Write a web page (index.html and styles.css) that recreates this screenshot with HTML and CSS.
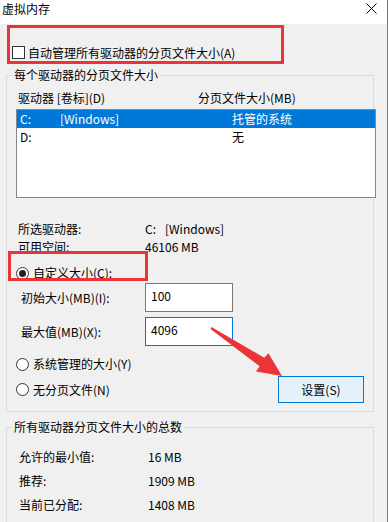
FILE: index.html
```html
<!DOCTYPE html>
<html lang="zh-CN">
<head>
<meta charset="utf-8">
<title>虚拟内存</title>
<link rel="stylesheet" href="styles.css">
</head>
<body>
<div class="window">
  <div class="titlebar">
    <span class="title">虚拟内存</span>
    <svg class="close" width="11" height="11" viewBox="0 0 11 11"><path d="M0.5 0.5 L10.5 10.5 M10.5 0.5 L0.5 10.5" stroke="#000" stroke-width="1" fill="none"/></svg>
  </div>
  <div class="content">
    <div class="auto">
      <span class="check"></span>
      <span>自动管理所有驱动器的分页文件大小(A)</span>
    </div>

    <fieldset class="group g1">
      <legend>每个驱动器的分页文件大小</legend>
      <div class="cols">
        <span>驱动器 [卷标](D)</span>
        <span>分页文件大小(MB)</span>
      </div>
      <div class="list">
        <div class="row sel"><span>C:</span><span>[Windows]</span><span>托管的系统</span></div>
        <div class="row"><span>D:</span><span></span><span>无</span></div>
      </div>
      <div class="info">
        <div class="kv"><span>所选驱动器:</span><span><span class="drv">C:</span>[Windows]</span></div>
        <div class="kv"><span>可用空间:</span><span>46106 MB</span></div>
      </div>
      <div class="opt custom">
        <span class="radio on"></span><span>自定义大小(C):</span>
      </div>
      <div class="field first">
        <span>初始大小(MB)(I):</span>
        <span class="input">100</span>
      </div>
      <div class="field second">
        <span>最大值(MB)(X):</span>
        <span class="input focus">4096</span>
      </div>
      <div class="opt sys">
        <span class="radio"></span><span>系统管理的大小(Y)</span>
      </div>
      <div class="last">
        <div class="opt none">
          <span class="radio"></span><span>无分页文件(N)</span>
        </div>
        <span class="btn">设置(S)</span>
      </div>
    </fieldset>

    <fieldset class="group g2">
      <legend>所有驱动器分页文件大小的总数</legend>
      <div class="totals">
        <div class="kv2"><span>允许的最小值:</span><span>16 MB</span></div>
        <div class="kv2"><span>推荐:</span><span>1909 MB</span></div>
        <div class="kv2"><span>当前已分配:</span><span>1408 MB</span></div>
      </div>
    </fieldset>
  </div>

  <div class="mark mark1"></div>
  <div class="mark mark2"></div>
  <svg class="arrow" width="389" height="522" viewBox="0 0 389 522">
    <polygon points="211.5,327 264.3,357.8 268.4,353.3 282,376 256,371.5 259.6,366.2 210.5,329" fill="#ec3337"/>
  </svg>
</div>
</body>
</html>
```

FILE: styles.css
```css
html, body {
  margin: 0;
  padding: 0;
  background: #ffffff;
}
body {
  width: 389px;
  height: 522px;
  overflow: hidden;
  font-family: "Noto Sans CJK SC", sans-serif;
  font-size: 12px;
  color: #000;
}
.window {
  position: relative;
  width: 388px;
  height: 522px;
  box-sizing: border-box;
  border-right: 1px solid #7a7a7a;
  background: #f0f0f0;
  overflow: hidden;
}
.titlebar {
  height: 24px;
  background: #fff;
  display: flex;
  justify-content: space-between;
  align-items: flex-start;
  padding-left: 2px;
  line-height: 18px;
}
.title {
  font-size: 12px;
}
.close {
  margin-top: 3px;
  margin-right: 10px;
}
.content {
  padding-left: 6px;
}
.auto {
  margin-top: 22px;
  margin-left: 6px;
  display: flex;
  align-items: center;
  gap: 3px;
  height: 13px;
  line-height: 13px;
}
.check {
  width: 13px;
  height: 13px;
  box-sizing: border-box;
  border: 1px solid #333;
  background: #fff;
}
.group {
  margin: 0;
  padding: 0;
  width: 368px;
  box-sizing: border-box;
  border: 1px solid #dcdcdc;
  min-width: 0;
}
.group legend {
  margin-left: 5px;
  padding: 0 2px;
  line-height: 14px;
  font-size: 12px;
}
.g1 {
  margin-top: 9px;
  padding-bottom: 8px;
}
.cols {
  margin-top: 9px;
  padding-left: 11px;
  display: grid;
  grid-template-columns: 180px 1fr;
  line-height: 14px;
}
.list {
  margin: 4px 0 0 9px;
  width: 360px;
  height: 89px;
  box-sizing: border-box;
  border: 1px solid #828790;
  background: #fff;
}
.row {
  display: grid;
  grid-template-columns: 40px 172px 1fr;
  height: 18px;
  line-height: 18px;
  padding-left: 3px;
}
.row.sel {
  background: #0078d7;
  color: #fff;
}
.info {
  margin-top: 24px;
  padding-left: 11px;
  display: flex;
  flex-direction: column;
  gap: 4px;
}
.kv {
  display: grid;
  grid-template-columns: 127px 1fr;
  line-height: 14px;
}
.drv {
  display: inline-block;
  width: 20px;
}
.opt {
  display: flex;
  align-items: center;
  gap: 4px;
  line-height: 14px;
}
.custom {
  margin-top: 12px;
  padding-left: 9px;
}
.sys {
  margin-top: 11px;
  padding-left: 9px;
}
.none {
  padding-left: 9px;
}
.radio {
  width: 13px;
  height: 13px;
  box-sizing: border-box;
  border: 1px solid #333;
  border-radius: 50%;
  background: #fff;
  display: flex;
  align-items: center;
  justify-content: center;
}
.radio.on::after {
  content: "";
  width: 7px;
  height: 7px;
  border-radius: 50%;
  background: #222;
}
.field {
  display: grid;
  grid-template-columns: 124px 88px;
  align-items: center;
  height: 29px;
  padding-left: 14px;
}
.field.first {
  margin-top: 3px;
}
.field.second {
  margin-top: 5px;
}
.input {
  height: 29px;
  box-sizing: border-box;
  border: 1px solid #7a7a7a;
  background: #fff;
  padding: 5px 0 0 5px;
  line-height: 14px;
}
.input.focus {
  border-color: #0078d7;
}
.last {
  margin-top: 5px;
  height: 27px;
  display: flex;
  justify-content: space-between;
  align-items: center;
}
.btn {
  width: 86px;
  height: 27px;
  box-sizing: border-box;
  border: 1px solid #0078d7;
  background: #e5f1fb;
  margin-right: 9px;
  display: flex;
  align-items: center;
  justify-content: center;
}
.g2 {
  margin-top: 8px;
  padding-bottom: 30px;
}
.totals {
  margin-top: 16px;
  padding-left: 12px;
  display: flex;
  flex-direction: column;
  gap: 10px;
}
.kv2 {
  display: grid;
  grid-template-columns: 129px 1fr;
  line-height: 14px;
}
.mark {
  position: absolute;
  box-sizing: border-box;
  border: 3px solid #ec3337;
}
.mark1 {
  left: 7px;
  top: 25px;
  width: 277px;
  height: 39px;
}
.mark2 {
  left: 8px;
  top: 251px;
  width: 140px;
  height: 30px;
}
.arrow {
  position: absolute;
  left: 0;
  top: 0;
  pointer-events: none;
}
```
